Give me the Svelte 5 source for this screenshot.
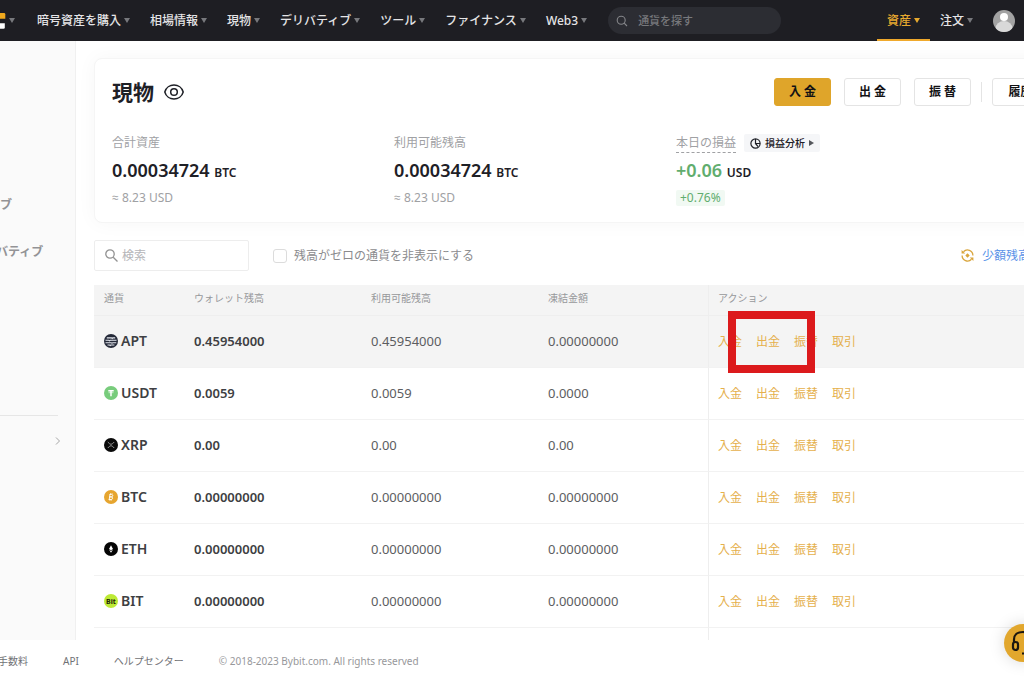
<script lang="ts">
  type Coin = {
    symbol: string;
    wallet: string;
    available: string;
    frozen: string;
  };

  const menu = ['暗号資産を購入', '相場情報', '現物', 'デリバティブ', 'ツール', 'ファイナンス', 'Web3'];
  const actions = ['入金', '出金', '振替', '取引'];
  const columns = ['通貨', 'ウォレット残高', '利用可能残高', '凍結金額', 'アクション'];

  const coins: Coin[] = [
    { symbol: 'APT', wallet: '0.45954000', available: '0.45954000', frozen: '0.00000000' },
    { symbol: 'USDT', wallet: '0.0059', available: '0.0059', frozen: '0.0000' },
    { symbol: 'XRP', wallet: '0.00', available: '0.00', frozen: '0.00' },
    { symbol: 'BTC', wallet: '0.00000000', available: '0.00000000', frozen: '0.00000000' },
    { symbol: 'ETH', wallet: '0.00000000', available: '0.00000000', frozen: '0.00000000' },
    { symbol: 'BIT', wallet: '0.00000000', available: '0.00000000', frozen: '0.00000000' }
  ];

  const balances = [
    { label: '合計資産', amount: '0.00034724', usd: '≈ 8.23 USD' },
    { label: '利用可能残高', amount: '0.00034724', usd: '≈ 8.23 USD' }
  ];

  let coinQuery = $state('');
  let hideZero = $state(false);
</script>

<div class="page">
  <header class="topbar">
    <a class="logo" href="#home" aria-label="Bybit">
      <svg width="6" height="16" viewBox="0 0 6 16">
        <path d="M0 0h4q1.300 0 1.300 1.300v4.400H0z" fill="#f0a91e" />
        <path d="M0 10.200h4.800v4.300q0 1.300-1.300 1.300H0z" fill="#fff" />
      </svg>
      <span class="caret"></span>
    </a>
    <nav class="menu">
      {#each menu as item}
        <a href="#menu">{item}<span class="caret"></span></a>
      {/each}
    </nav>
    <label class="top-search">
      <svg width="12" height="12" viewBox="0 0 12 12" fill="none" stroke="#85868a" stroke-width="1.100">
        <circle cx="5.200" cy="5.200" r="4" />
        <path d="M8.200 8.200 11 11" />
      </svg>
      <input type="search" placeholder="通貨を探す" aria-label="通貨を探す" />
    </label>
    <nav class="account">
      <a class="active" href="#assets">資産<span class="caret"></span></a>
      <a href="#orders">注文<span class="caret"></span></a>
      <button class="avatar" aria-label="アカウント">
        <svg width="22" height="22" viewBox="0 0 22 22">
          <clipPath id="round"><circle cx="11" cy="11" r="11" /></clipPath>
          <g clip-path="url(#round)">
            <rect width="22" height="22" fill="#a3a3a3" />
            <ellipse cx="11" cy="18.500" rx="8.500" ry="7.500" fill="#d9d9d9" />
            <circle cx="11" cy="7" r="4" fill="#fff" />
          </g>
        </svg>
      </button>
    </nav>
  </header>

  <div class="body">
    <aside class="sidebar">
      <nav>
        <a class="indent" href="#group">ブ</a>
        <a href="#derivatives">バティブ</a>
      </nav>
      <hr />
      <button class="expand" aria-label="開く">
        <svg width="6" height="8" viewBox="0 0 6 8" fill="none" stroke="#a5a5a5">
          <path d="M1 .5 4.500 4 1 7.500" />
        </svg>
      </button>
    </aside>

    <main class="content">
      <section class="card">
        <div class="card-head">
          <h1>現物</h1>
          <button class="eye" aria-label="残高を隠す">
            <svg width="20" height="16" viewBox="0 0 20 16" fill="none" stroke="#1e2026" stroke-width="1.500">
              <path d="M.8 8C2 3.500 6 1 10 1s8 2.500 9.200 7C18 12.500 14 15 10 15S2 12.500.8 8z" />
              <circle cx="10" cy="8" r="3.300" />
            </svg>
          </button>
          <div class="buttons">
            <button class="btn primary">入 金</button>
            <button class="btn">出 金</button>
            <button class="btn">振 替</button>
            <span class="divider"></span>
            <button class="btn">履歴</button>
          </div>
        </div>
        <div class="stats">
          {#each balances as balance}
            <div>
              <div class="stat-label">{balance.label}</div>
              <div class="stat-value">{balance.amount} <small>BTC</small></div>
              <div class="stat-usd">{balance.usd}</div>
            </div>
          {/each}
          <div>
            <div class="stat-label">
              <span class="dashed">本日の損益</span>
              <a class="analysis" href="#analysis">
                <svg width="11" height="11" viewBox="0 0 11 11" fill="none" stroke="#1e2026" stroke-width="1.200">
                  <circle cx="5.500" cy="5.500" r="4.600" />
                  <path d="M5.500 1v4.500h4.600M5.500 5.500l2.600 3.200" />
                </svg>
                損益分析
                <svg width="5" height="6" viewBox="0 0 5 6"><path d="M0 0l5 3-5 3z" fill="#55575c" /></svg>
              </a>
            </div>
            <div class="stat-value gain">+0.06 <small>USD</small></div>
            <div class="stat-usd"><span class="percent">+0.76%</span></div>
          </div>
        </div>
      </section>

      <div class="toolbar">
        <label class="search">
          <svg width="13" height="13" viewBox="0 0 13 13" fill="none" stroke="#929292" stroke-width="1.300">
            <circle cx="5" cy="5" r="4.200" />
            <path d="M8.200 8.200 12.500 12.500" />
          </svg>
          <input type="search" placeholder="検索" aria-label="検索" bind:value={coinQuery} />
        </label>
        <label class="check">
          <input type="checkbox" bind:checked={hideZero} />
          残高がゼロの通貨を非表示にする
        </label>
        <a class="convert" href="#convert">
          <svg width="13" height="13" viewBox="0 0 13 13" fill="none" stroke="#d9a53c" stroke-width="1.300">
            <path d="M2.500 2.800a5.400 5.400 0 0 1 9.400 3.700M10.500 10.200A5.400 5.400 0 0 1 1.100 6.500" />
            <path d="M.6 1v3.600h3.600zM12.400 12V8.400H8.800z" fill="#d9a53c" stroke="none" />
            <path d="M6.500 4.300 8.700 6.500 6.500 8.700 4.300 6.500z" fill="#d9a53c" stroke="none" />
          </svg>
          少額残高
        </a>
      </div>

      <table>
        <colgroup>
          <col class="col-coin" />
          <col class="col-amount" />
          <col class="col-amount" />
          <col class="col-frozen" />
          <col />
        </colgroup>
        <thead>
          <tr>
            {#each columns as column}
              <th scope="col">{column}</th>
            {/each}
          </tr>
        </thead>
        <tbody>
          {#each coins as coin, i}
            <tr class:hovered={i === 0}>
              <td>
                <div class="coin">
                  <svg width="14" height="14" viewBox="0 0 14 14">
                    {#if coin.symbol === 'APT'}
                      <circle cx="7" cy="7" r="7" fill="#242938" />
                      <path
                        d="M2.800 3.900h4.700l.7.600.7-.6h2.300M1.500 6.300h3.300l.7.600.7-.6h6.300M1.500 8.700h5.800l.7.600.7-.6h3.600M3.500 11h2l.7.500.7-.5h3.500"
                        fill="none"
                        stroke="#e4e7ee"
                        stroke-width="1.100"
                      />
                    {:else if coin.symbol === 'USDT'}
                      <circle cx="7" cy="7" r="7" fill="#78cc7c" />
                      <path d="M4.300 4.700h5.400M7 4.700v5.600" fill="none" stroke="#fff" stroke-width="1.500" />
                      <path d="M4.500 6.700h5" fill="none" stroke="#fff" stroke-width=".6" />
                    {:else if coin.symbol === 'XRP'}
                      <circle cx="7" cy="7" r="7" fill="#0a0a0a" />
                      <path
                        d="M3.800 4l1.700 1.700q1.500 1.300 3 0L10.200 4M3.800 10l1.700-1.700q1.500-1.300 3 0l1.700 1.700"
                        fill="none"
                        stroke="#b5b5b5"
                        stroke-width=".8"
                      />
                    {:else if coin.symbol === 'BTC'}
                      <circle cx="7" cy="7" r="7" fill="#e6a52f" />
                      <path
                        d="M5.600 4.500h2q1.400.1 1.200 1.300-.2 1.100-1.500 1.100H5.500h1.800q1.500.1 1.300 1.400-.2 1.200-1.600 1.200H4.700M6 4.200 5.200 9.700M6.500 3.300v1M8 3.300v1M5.800 9.600v1M7.200 9.600v1"
                        fill="none"
                        stroke="#fff"
                        stroke-width=".9"
                      />
                    {:else if coin.symbol === 'ETH'}
                      <circle cx="7" cy="7" r="7" fill="#050505" />
                      <path d="M7 3.300 9 7 7 8.300 5 7zM7 8.900l1.900-1.200L7 10.800 5.100 7.700z" fill="#fff" />
                    {:else}
                      <circle cx="7" cy="7" r="7" fill="#bdea35" />
                      <text x="7" y="10" text-anchor="middle" class="bit">Bit</text>
                    {/if}
                  </svg>
                  {coin.symbol}
                </div>
              </td>
              <td class="wallet">{coin.wallet}</td>
              <td>{coin.available}</td>
              <td>{coin.frozen}</td>
              <td class="actions">
                <div class="links">
                  {#each actions as action}
                    <a href="#action">{action}</a>
                  {/each}
                </div>
                {#if i === 0}
                  <span class="highlight"></span>
                {/if}
              </td>
            </tr>
          {/each}
          <tr class="rest">
            <td colspan="4"></td>
            <td class="actions"></td>
          </tr>
        </tbody>
      </table>
    </main>
  </div>

  <footer>
    <a class="fees" href="#fees">手数料</a>
    <a href="#api">API</a>
    <a href="#help">ヘルプセンター</a>
    <span>© 2018-2023 Bybit.com. All rights reserved</span>
  </footer>

  <button class="support" aria-label="サポート">
    <svg width="24" height="26" viewBox="0 0 24 26" fill="none" stroke="#1b1710" stroke-width="2.200">
      <path d="M3 13V9.500C3 5 6 2 12 2s9 3 9 7.500V13" />
      <rect x="2" y="12" width="5" height="8" rx="2.500" />
      <rect x="17" y="12" width="5" height="8" rx="2.500" />
      <path d="M19.500 20q0 3.500-4 3.500H11" />
    </svg>
  </button>
</div>

<style>
  :global(body) {
    background: #fff;
    font-family: 'Noto Sans', 'Open Sans', 'Noto Sans CJK JP', sans-serif;
    font-size: 12px;
    line-height: 18px;
    color: #5c5d61;
  }

  * {
    box-sizing: border-box;
  }

  a {
    color: inherit;
    text-decoration: none;
    white-space: nowrap;
  }

  button,
  input {
    font: inherit;
    margin: 0;
  }

  button {
    padding: 0;
    border: 0;
    background: none;
    cursor: pointer;
  }

  svg {
    display: block;
    flex: none;
  }

  .page {
    position: relative;
    overflow: hidden;
  }

  .topbar {
    display: flex;
    align-items: center;
    height: 41px;
    padding-right: 9px;
    background: #1e1e23;
    color: #e4e4e6;
    font-weight: 500;
  }

  .topbar a {
    display: flex;
    align-items: center;
  }

  .caret {
    margin-left: 3px;
    border: 3px solid transparent;
    border-top: 5px solid #77787c;
    border-bottom: 0;
  }

  .logo {
    width: 37px;
  }

  .menu {
    display: flex;
    gap: 20px;
  }

  .top-search {
    display: flex;
    align-items: center;
    gap: 10px;
    width: 173px;
    height: 27px;
    margin-left: 21px;
    padding: 0 8px;
    border-radius: 14px;
    background: #2c2d33;
  }

  .top-search input,
  .search input {
    width: 100%;
    min-width: 0;
    padding: 0;
    border: 0;
    outline: 0;
    background: none;
    color: inherit;
  }

  .top-search input {
    font-size: 11px;
  }

  .top-search input::placeholder {
    color: #77787c;
    opacity: 1;
  }

  .account {
    display: flex;
    align-items: center;
    height: 100%;
    margin-left: auto;
  }

  .account .active {
    height: 100%;
    margin-right: 10px;
    padding: 2px 10px 0;
    border-bottom: 2px solid #f0a92c;
    color: #e6a92f;
  }

  .active .caret {
    border-top-color: #e6a92f;
  }

  .avatar {
    margin-left: 20px;
  }

  .body {
    display: flex;
  }

  .sidebar {
    flex: 0 0 76px;
    padding-top: 146px;
    border-right: 1px solid #f0f0f0;
    background: #fafafa;
    color: #939396;
    font-weight: 700;
  }

  .sidebar nav {
    display: flex;
    flex-direction: column;
    gap: 11px;
    margin-left: -4px;
  }

  .sidebar nav a {
    line-height: 36px;
  }

  .sidebar .indent {
    padding-left: 4px;
  }

  .sidebar hr {
    margin: 145px 17px 0 0;
    border: 0;
    border-top: 1px solid #e6e6e6;
  }

  .expand {
    display: block;
    margin: 21px 14px 0 auto;
  }

  .content {
    flex: 1;
    min-width: 0;
    margin-right: -42px;
    padding: 17px 0 0 18px;
  }

  .card {
    height: 165px;
    padding: 19px 16px 0 17px;
    border: 1px solid #f5f5f5;
    border-radius: 8px;
    background: #fff;
    box-shadow: 0 0 20px rgba(0, 0, 0, 0.04);
    color: #1e2026;
  }

  .card-head {
    display: flex;
    align-items: center;
    height: 28px;
  }

  h1 {
    margin: 0 10px 0 0;
    font-size: 21px;
    line-height: 28px;
  }

  .buttons {
    display: flex;
    align-items: center;
    gap: 13px;
    margin-left: auto;
  }

  .btn {
    width: 57px;
    height: 28px;
    border: 1px solid #e4e4e4;
    border-radius: 3px;
    color: #121214;
    font-weight: 700;
  }

  .primary {
    border-color: #dfa52a;
    background: #dfa52a;
  }

  .divider {
    width: 1px;
    height: 20px;
    margin: 0 -3px;
    background: #e4e4e4;
  }

  .stats {
    display: grid;
    grid-template-columns: repeat(3, 282px);
    margin-top: 28px;
  }

  .stat-label {
    display: flex;
    align-items: center;
    gap: 8px;
    height: 18px;
    color: #a0a1a4;
  }

  .stat-value {
    margin-top: 6px;
    font-size: 18px;
    font-weight: 600;
    line-height: 24px;
  }

  .stat-value small {
    font-size: 12px;
  }

  .stat-usd {
    margin-top: 5px;
    color: #a0a1a4;
    line-height: 16px;
  }

  .dashed {
    border-bottom: 1px dashed #a0a1a4;
  }

  .analysis {
    display: flex;
    align-items: center;
    gap: 4px;
    padding: 0 6px;
    border-radius: 2px;
    background: #f5f6f8;
    color: #1e2026;
    font-size: 10px;
    font-weight: 500;
  }

  .gain {
    color: #61ad6e;
  }

  .gain small {
    color: #1e2026;
  }

  .percent {
    display: inline-block;
    padding: 0 4px;
    border-radius: 2px;
    background: #f1f9f3;
    color: #61ad6e;
  }

  .toolbar {
    display: flex;
    align-items: center;
    height: 31px;
    margin: 17px 36px 14px 0;
  }

  .search {
    display: flex;
    align-items: center;
    gap: 4px;
    width: 155px;
    height: 31px;
    padding: 0 10px;
    border: 1px solid #ededed;
    border-radius: 2px;
  }

  .search input::placeholder {
    color: #b5b5b8;
    opacity: 1;
  }

  .check {
    display: flex;
    align-items: center;
    gap: 7px;
    margin-left: 24px;
    color: #8b8b8e;
  }

  .check input {
    width: 14px;
    height: 14px;
    border: 1px solid #dcdcdc;
    border-radius: 3px;
    background: #fff;
    appearance: none;
  }

  .check input:checked {
    background: #dfa52a;
  }

  .convert {
    display: flex;
    align-items: center;
    gap: 8px;
    margin-left: auto;
    color: #5b93e8;
  }

  table {
    width: 100%;
    border-collapse: separate;
    border-spacing: 0;
    table-layout: fixed;
  }

  .col-coin {
    width: 90px;
  }

  .col-amount {
    width: 177px;
  }

  .col-frozen {
    width: 170px;
  }

  th,
  td {
    padding: 0 10px;
    border-bottom: 1px solid #f2f2f2;
    text-align: left;
  }

  th {
    height: 31px;
    padding-bottom: 5px;
    background: #f4f4f4;
    border-color: #eeeeee;
    color: #97989b;
    font-size: 10px;
    font-weight: 400;
  }

  td {
    height: 52px;
    padding-bottom: 2px;
    font-size: 13px;
  }

  th:last-child,
  .actions {
    border-left: 1px solid #eeeeee;
    padding-left: 9px;
  }

  .hovered td {
    background: #f4f4f4;
  }

  .coin {
    display: flex;
    align-items: center;
    gap: 3px;
    color: #3e3f43;
    font-size: 14px;
    font-weight: 600;
  }

  .bit {
    fill: #1c2408;
    font-size: 7px;
    font-weight: 700;
  }

  .wallet {
    color: #3e3f43;
    font-weight: 600;
  }

  .actions {
    position: relative;
    padding-bottom: 0;
    color: #e5b04c;
    font-size: 12px;
  }

  .links {
    display: flex;
    gap: 14px;
  }

  .highlight {
    position: absolute;
    z-index: 1;
    top: -5px;
    left: 19px;
    width: 87px;
    height: 62px;
    border: 8px solid #dc1a1c;
    pointer-events: none;
  }

  .rest td {
    height: 12px;
    padding-bottom: 0;
    border-bottom: 0;
  }

  footer {
    display: flex;
    align-items: center;
    gap: 35px;
    height: 42px;
    background: #fff;
    color: #707175;
    font-size: 10px;
  }

  footer .fees {
    margin-left: -2px;
  }

  footer span {
    color: #97989b;
  }

  .support {
    position: absolute;
    right: -18px;
    bottom: 20px;
    display: grid;
    place-items: center;
    width: 38px;
    height: 38px;
    border-radius: 50%;
    background: #e2a72d;
    box-shadow: 0 0 16px rgba(0, 0, 0, 0.15);
  }
</style>
